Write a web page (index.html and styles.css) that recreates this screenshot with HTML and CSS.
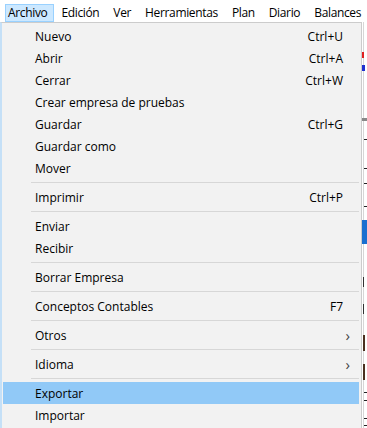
FILE: index.html
```html
<!DOCTYPE html>
<html lang="es">
<head>
<meta charset="utf-8">
<link rel="stylesheet" href="styles.css">
</head>
<body>
<div class="window">
  <div class="menubar">
    <span class="mb-item active">Archivo</span>
    <span class="mb-item">Edición</span>
    <span class="mb-item">Ver</span>
    <span class="mb-item">Herramientas</span>
    <span class="mb-item">Plan</span>
    <span class="mb-item">Diario</span>
    <span class="mb-item">Balances</span>
  </div>
  <div class="backdrop">
    <div class="bd-line"></div>
    <span class="bd-mark flag" style="top:30px"></span>
    <span class="bd-mark hl" style="top:43px"></span>
    <span class="bd-mark dk" style="top:96px"></span>
    <span class="bd-mark tick" style="top:117px"></span>
    <span class="bd-mark tick" style="top:146px"></span>
    <span class="bd-mark tick" style="top:161px"></span>
    <span class="bd-mark tick" style="top:184px"></span>
    <span class="bd-mark blue" style="top:198px"></span>
    <span class="bd-mark vt" style="top:255px"></span>
    <span class="bd-mark vt" style="top:282px"></span>
    <span class="bd-mark box" style="top:313px"></span>
    <span class="bd-mark box" style="top:342px"></span>
    <span class="bd-mark tick" style="top:370px"></span>
    <span class="bd-mark tick" style="top:378px"></span>
    <span class="bd-mark tick" style="top:396px"></span>
    <span class="bd-mark tick" style="top:403px"></span>
  </div>
  <div class="popup">
    <div class="mi"><span class="lbl">Nuevo</span><span class="sc">Ctrl+U</span></div>
    <div class="mi"><span class="lbl">Abrir</span><span class="sc">Ctrl+A</span></div>
    <div class="mi"><span class="lbl">Cerrar</span><span class="sc">Ctrl+W</span></div>
    <div class="mi"><span class="lbl">Crear empresa de pruebas</span></div>
    <div class="mi"><span class="lbl">Guardar</span><span class="sc">Ctrl+G</span></div>
    <div class="mi"><span class="lbl">Guardar como</span></div>
    <div class="mi"><span class="lbl">Mover</span></div>
    <div class="sep"></div>
    <div class="mi"><span class="lbl">Imprimir</span><span class="sc">Ctrl+P</span></div>
    <div class="sep"></div>
    <div class="mi"><span class="lbl">Enviar</span></div>
    <div class="mi"><span class="lbl">Recibir</span></div>
    <div class="sep"></div>
    <div class="mi"><span class="lbl">Borrar Empresa</span></div>
    <div class="sep"></div>
    <div class="mi"><span class="lbl">Conceptos Contables</span><span class="sc">F7</span></div>
    <div class="sep"></div>
    <div class="mi"><span class="lbl">Otros</span><span class="arrow">&#x203A;</span></div>
    <div class="sep"></div>
    <div class="mi"><span class="lbl">Idioma</span><span class="arrow">&#x203A;</span></div>
    <div class="sep"></div>
    <div class="mi hot"><span class="lbl">Exportar</span></div>
    <div class="mi"><span class="lbl">Importar</span></div>
  </div>
</div>
</body>
</html>
```
FILE: styles.css
```css
* { box-sizing: border-box; }
html, body {
  margin: 0;
  padding: 0;
  background: #ffffff;
}
body {
  font-family: "Open Sans", "Noto Sans", "Liberation Sans", sans-serif;
  font-size: 12px;
  color: #000;
  width: 367px;
  height: 428px;
  overflow: hidden;
}
.window {
  position: relative;
  width: 367px;
  height: 428px;
}
.menubar {
  display: flex;
  height: 22px;
  padding: 4px 0 0 5px;
  background: #ffffff;
  letter-spacing: -0.35px;
}
.mb-item {
  height: 18px;
  line-height: 16px;
  padding: 0 5px 0 2px;
  border: 1px solid transparent;
  margin-right: 5px;
  white-space: nowrap;
}
.mb-item.active {
  background: #cce8ff;
  border-color: #99d1ff;
  padding-right: 6px;
  margin-right: 4px;
}
.backdrop {
  position: absolute;
  left: 362px;
  top: 22px;
  width: 5px;
  height: 406px;
  background: #fff;
}
.bd-line {
  position: absolute;
  left: 1px;
  top: 0;
  bottom: 0;
  width: 1px;
  background: #d6d6d6;
}
.bd-mark {
  position: absolute;
  left: 2px;
  width: 3px;
  height: 1px;
  background: #222;
}
.bd-mark.flag { height: 6px; background: #e02020; left: 0; width: 2px; }
.bd-mark.hl { height: 6px; background: #2030d0; left: 0; width: 3px; top: 36px; }
.bd-mark.dk { height: 3px; background: #888; width: 5px; left: 0; }
.bd-mark.blue { height: 24px; width: 5px; left: 0; background: #1a6fd0; }
.bd-mark.vt { height: 10px; width: 1px; left: 1px; background: #333; }
.bd-mark.box { height: 16px; width: 2px; left: 1px; background: #4a3020; }
.popup {
  position: absolute;
  left: 0;
  top: 22px;
  width: 362px;
  height: 406px;
  background: #f2f2f2;
  border-top: 1px solid #cccccc;
  border-right: 1px solid #cccccc;
  border-left: 2px solid #c5e0f7;
  padding: 2px 2px 0 1px;
  display: flex;
  flex-direction: column;
}
.mi {
  display: flex;
  align-items: center;
  height: 22px;
  flex: none;
  padding-left: 32px;
  padding-right: 16px;
  white-space: nowrap;
}
.mi .lbl { flex: 1; }
.mi .sc { text-align: right; }
.mi .arrow {
  font-size: 15px;
  color: #444;
  margin-right: -7px;
  line-height: 1;
}
.mi.hot { background: #91c9f7; }
.sep {
  flex: none;
  height: 7px;
  display: flex;
  align-items: center;
  padding-left: 28px;
}
.sep::after {
  content: "";
  display: block;
  height: 1px;
  width: 100%;
  background: #d7d7d7;
}
```
